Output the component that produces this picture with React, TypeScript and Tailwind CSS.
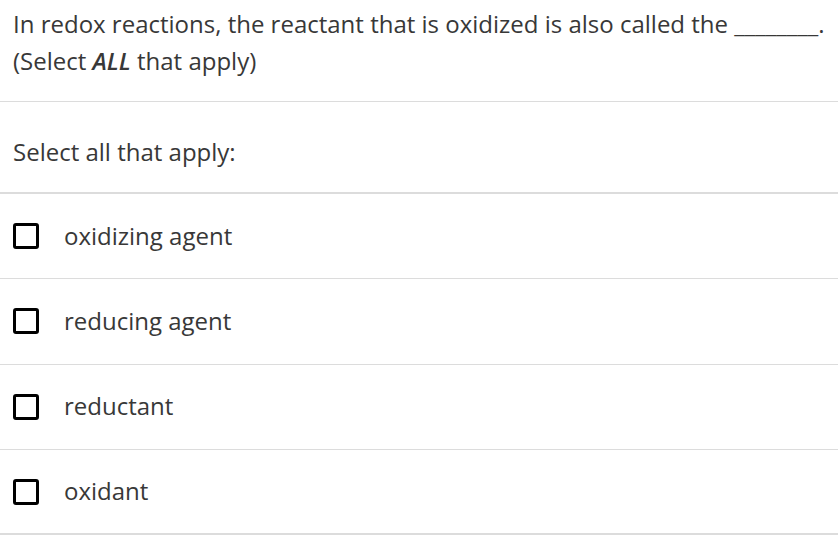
const options = ["oxidizing agent", "reducing agent", "reductant", "oxidant"];

export default function App() {
    return (
        <div className="w-[838px] bg-white font-['Open_Sans',sans-serif] text-[24px] leading-[37px] text-[#383838]">
            <div className="border-b border-[#dcdcdc] pl-[13px] pt-[5px] pb-[22px]">
                <p>
                    In redox reactions, the reactant that is oxidized is also called the ________.
                </p>
                <p>
                    (Select <b className="italic font-semibold">ALL</b> that apply)
                </p>
            </div>
            <div className="border-b-2 border-[#dcdcdc] pl-[13px] pt-[31px] pb-[22px]">
                Select all that apply:
            </div>
            {options.map((opt, i) => (
                <label
                    key={opt}
                    className={
                        "flex h-[85.33px] items-center gap-[25px] border-[#dcdcdc] pl-[13px] " +
                        (i === options.length - 1 ? "border-b-2" : "border-b")
                    }
                >
                    <span className="h-[26px] w-[26px] shrink-0 rounded-[3px] border-[3px] border-black" />
                    <span className="-translate-y-px">{opt}</span>
                </label>
            ))}
        </div>
    );
}
